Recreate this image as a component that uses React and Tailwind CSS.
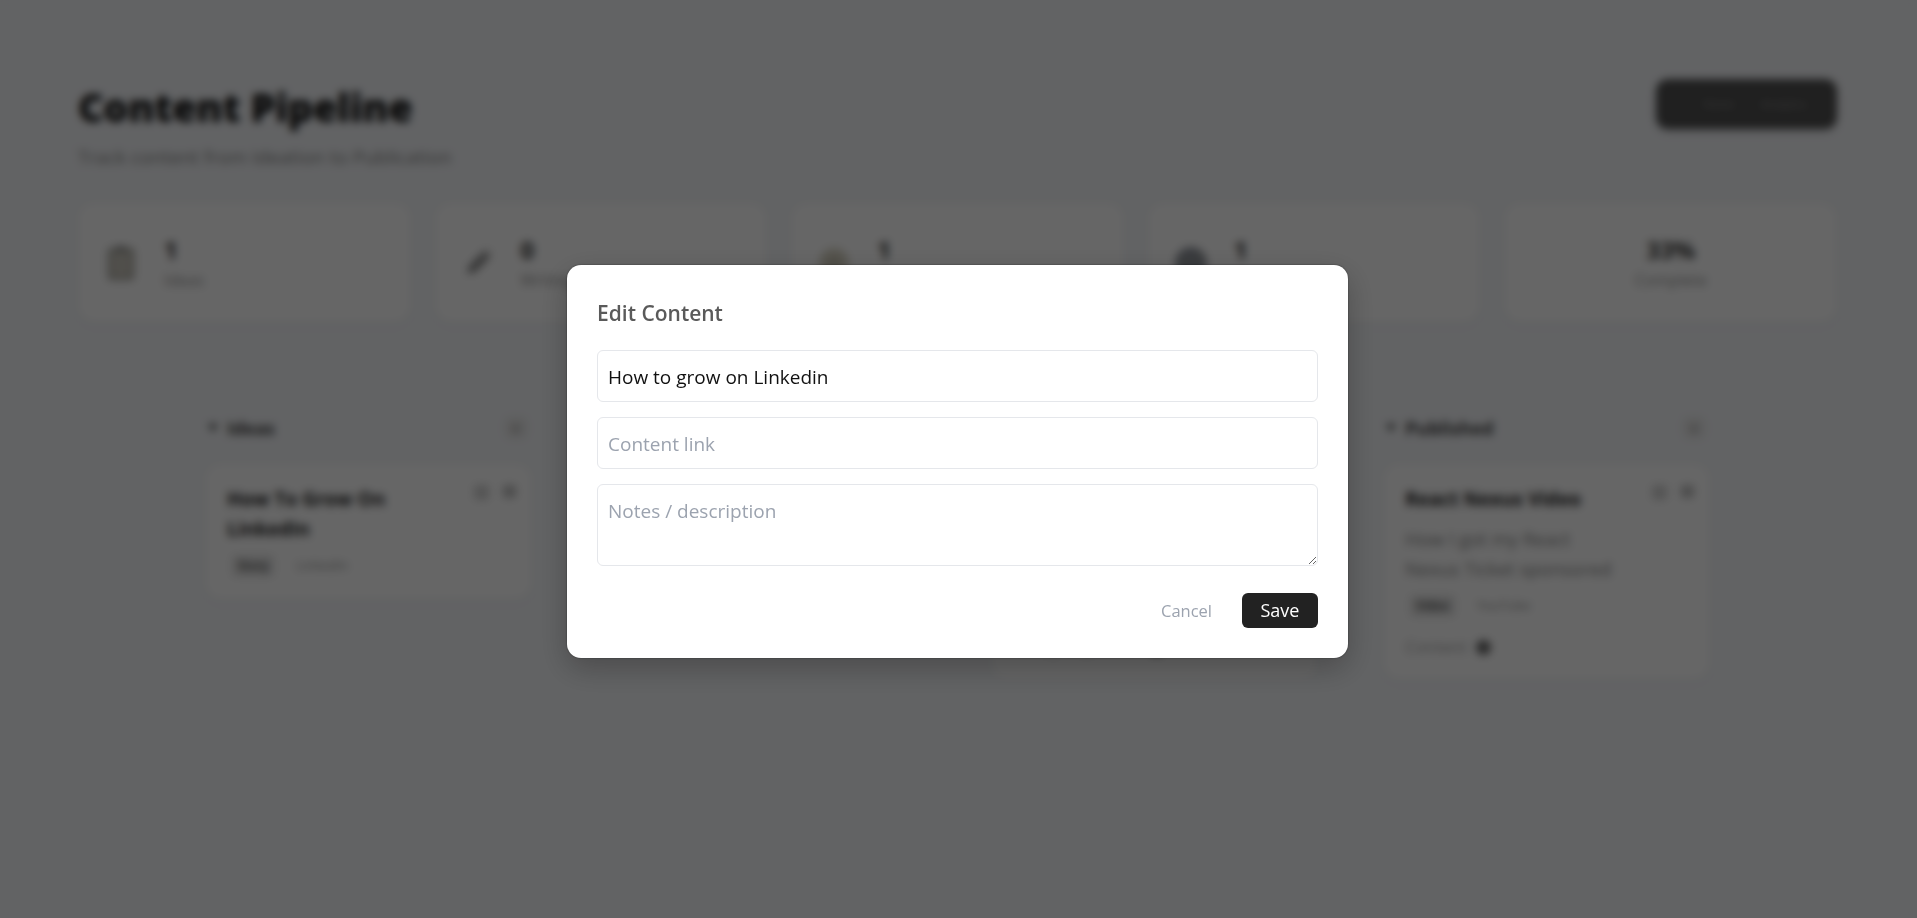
import React from 'react';

const font = { fontFamily: '"Open Sans", "Noto Sans", sans-serif' };

const ClipboardIcon = () => (
  <svg width="32" height="36" viewBox="0 0 32 36">
    <rect x="4" y="4" width="24" height="30" rx="3" fill="#c9c6bc" stroke="#8a8a84" strokeWidth="2" />
    <rect x="11" y="1" width="10" height="6" rx="2" fill="#8a8a8a" />
  </svg>
);

const PencilIcon = () => (
  <svg width="34" height="34" viewBox="0 0 34 34">
    <path d="M6 28l2-8L22 6l6 6-14 14z" fill="#888" />
    <path d="M22 6l3-3 6 6-3 3z" fill="#bbb" />
  </svg>
);

const ClapperIcon = () => (
  <svg width="36" height="36" viewBox="0 0 36 36">
    <circle cx="18" cy="18" r="15" fill="#d8d4c4" />
    <circle cx="18" cy="18" r="6" fill="#c4c0b0" />
  </svg>
);

const GlobeIcon = () => (
  <svg width="36" height="36" viewBox="0 0 36 36">
    <circle cx="18" cy="18" r="16" fill="#8f939c" />
    <path d="M8 12c6-2 8 2 6 5s-5 2-6 1zM22 8c4 0 8 4 8 8-3 1-6-1-7-3s-2-3-1-5z" fill="#9a9e98" />
  </svg>
);

const stats = [
  { icon: <ClipboardIcon />, value: '1', label: 'Ideas' },
  { icon: <PencilIcon />, value: '0', label: 'Writing' },
  { icon: <ClapperIcon />, value: '1', label: 'Filming' },
  { icon: <GlobeIcon />, value: '1', label: 'Published' },
];

const columns = [
  {
    name: 'Ideas',
    cards: [{ title: 'How To Grow On LinkedIn', tag: 'Story', platform: 'LinkedIn' }],
  },
  {
    name: 'Writing',
    cards: [],
  },
  {
    name: 'Filming',
    cards: [
      {
        title: 'Build In Public Series',
        desc: 'Weekly recap of what I shipped',
        tag: 'Reel',
        platform: 'YouTube',
        footer: 'Ready to publish',
      },
    ],
  },
  {
    name: 'Published',
    cards: [
      {
        title: 'React Nexus Video',
        desc: 'How I got my React Nexus Ticket sponsored',
        tag: 'Video',
        platform: 'YouTube',
        footer: 'Content',
      },
    ],
  },
];

const Card = ({ card }) => (
  <div className="bg-white rounded-2xl shadow-[0_2px_10px_rgba(0,0,0,0.04)] pl-[22px] pr-[16px] pt-[20px] pb-[22px]">
    <div className="flex justify-between items-start gap-3">
      <h3 className="text-[19px] leading-[30px] font-bold text-[#222] w-[220px]">{card.title}</h3>
      <div className="flex gap-[14px] pt-[1px] shrink-0">
        <span className="w-[15px] h-[15px] rounded-sm bg-[#d4d4d4]" />
        <span className="w-[13px] h-[13px] rounded-sm bg-[#c0c0c0]" />
      </div>
    </div>
    {card.desc && (
      <p className="text-[18.5px] leading-[30px] text-[#888] mt-[10px] w-[215px]">{card.desc}</p>
    )}
    <div className="flex items-center gap-[22px] mt-[11px] pl-[5px]">
      <span className="text-[12px] font-semibold text-[#444] bg-[#e5e5e5] rounded px-[6px] py-[2px]">{card.tag}</span>
      <span className="text-[13px] text-[#999]">{card.platform}</span>
    </div>
    {card.footer && (
      <div className="flex items-center gap-[9px] mt-[20px]">
        <span className="text-[16.5px] leading-[20px] text-[#aaa]">{card.footer}</span>
        <span className="w-[15px] h-[15px] rounded-full bg-[#6b6b6b]" />
      </div>
    )}
  </div>
);

const Column = ({ column }) => (
  <div>
    <div className="flex items-center justify-between h-[32px] pl-[3px] pr-[5px] mb-[20px]">
      <div className="flex items-center gap-[9px]">
        <svg width="10" height="8" viewBox="0 0 10 8"><path d="M0 0h10L5 8z" fill="#555" /></svg>
        <span className="text-[18px] font-bold text-[#444]">{column.name}</span>
      </div>
      <span className="w-[22px] h-[22px] rounded-md bg-[#e8e8e8] flex items-center justify-center text-[15px] leading-none text-[#555]">+</span>
    </div>
    <div className="flex flex-col gap-4">
      {column.cards.map((card) => (
        <Card key={card.title} card={card} />
      ))}
    </div>
  </div>
);

const App = () => {
  return (
    <div className="relative h-screen overflow-hidden bg-[#f5f7fa]" style={font}>
      <div className="pl-[78px] pr-[80px] pt-[80px]">
        <div className="flex justify-between items-start">
          <div>
            <h1 className="text-[39px] leading-[50px] font-extrabold text-[#111] pt-[2px]">Content Pipeline</h1>
            <p className="text-[19px] leading-[26px] text-[#888] mt-[12px]">Track content from Ideation to Publication</p>
          </div>
          <div className="flex items-center gap-[27px] w-[181px] h-[50px] -mt-[1px] bg-[#505050] rounded-xl shadow-md pl-[47px] text-[11px] text-[#888]">
            <span>Home</span>
            <span>Analytics</span>
          </div>
        </div>

        <div className="grid grid-cols-5 gap-6 mt-[33px]">
          {stats.map((s) => (
            <div key={s.label} className="flex items-center gap-[25px] h-[119px] bg-white rounded-2xl shadow-[0_2px_10px_rgba(0,0,0,0.04)] pl-[25px]">
              <div className="w-[36px] flex justify-center">{s.icon}</div>
              <div>
                <div className="text-[24px] leading-[34px] font-bold text-[#333]">{s.value}</div>
                <div className="text-[16px] leading-[26px] text-[#999]">{s.label}</div>
              </div>
            </div>
          ))}
          <div className="flex flex-col items-center justify-center h-[119px] bg-white rounded-2xl shadow-[0_2px_10px_rgba(0,0,0,0.04)]">
            <div className="text-[24px] leading-[34px] font-bold text-[#333]">33%</div>
            <div className="text-[16px] leading-[26px] text-[#999]">Complete</div>
          </div>
        </div>

        <div className="grid grid-cols-4 gap-[66px] w-[1505px] ml-[127px] mt-[90px]">
          {columns.map((column) => (
            <Column key={column.name} column={column} />
          ))}
        </div>
      </div>

      {/* edit modal over the blurred board */}
      <div className="fixed inset-0 flex items-center justify-center bg-black/60 backdrop-blur-[4px]">
        <div className="w-[781px] h-[393px] mt-[5px] mr-[2px] bg-white rounded-[14px] shadow-[0_0_2px_rgba(0,0,0,0.5),0_10px_30px_rgba(0,0,0,0.25)] p-[30px] flex flex-col">
          <h2 className="text-[21px] leading-[36px] font-semibold text-[#5a5a5a] mb-[19px]">Edit Content</h2>
          <input
            readOnly
            value="How to grow on Linkedin"
            className="w-full h-[52px] shrink-0 border border-[#e5e7eb] rounded-md px-[10px] pt-[1px] text-[19px] text-[#111] placeholder:text-[#9ca3af] outline-none"
          />
          <input
            readOnly
            placeholder="Content link"
            className="w-full h-[52px] shrink-0 mt-[15px] border border-[#e5e7eb] rounded-md px-[10px] pt-[1px] text-[19px] text-[#111] placeholder:text-[#9ca3af] outline-none"
          />
          <textarea
            readOnly
            placeholder="Notes / description"
            className="block w-full h-[82px] shrink-0 mt-[15px] border border-[#e5e7eb] rounded-md px-[10px] py-[13px] text-[19px] leading-[26px] text-[#111] placeholder:text-[#9ca3af] outline-none"
          />
          <div className="flex justify-end items-center gap-[30px] mt-[27px]">
            <button className="text-[16.5px] text-[#9ca3af] pt-[1px]">Cancel</button>
            <button className="w-[76px] h-[35px] bg-[#222] rounded-md text-[18px] text-white">Save</button>
          </div>
        </div>
      </div>
    </div>
  );
};

export default App;
